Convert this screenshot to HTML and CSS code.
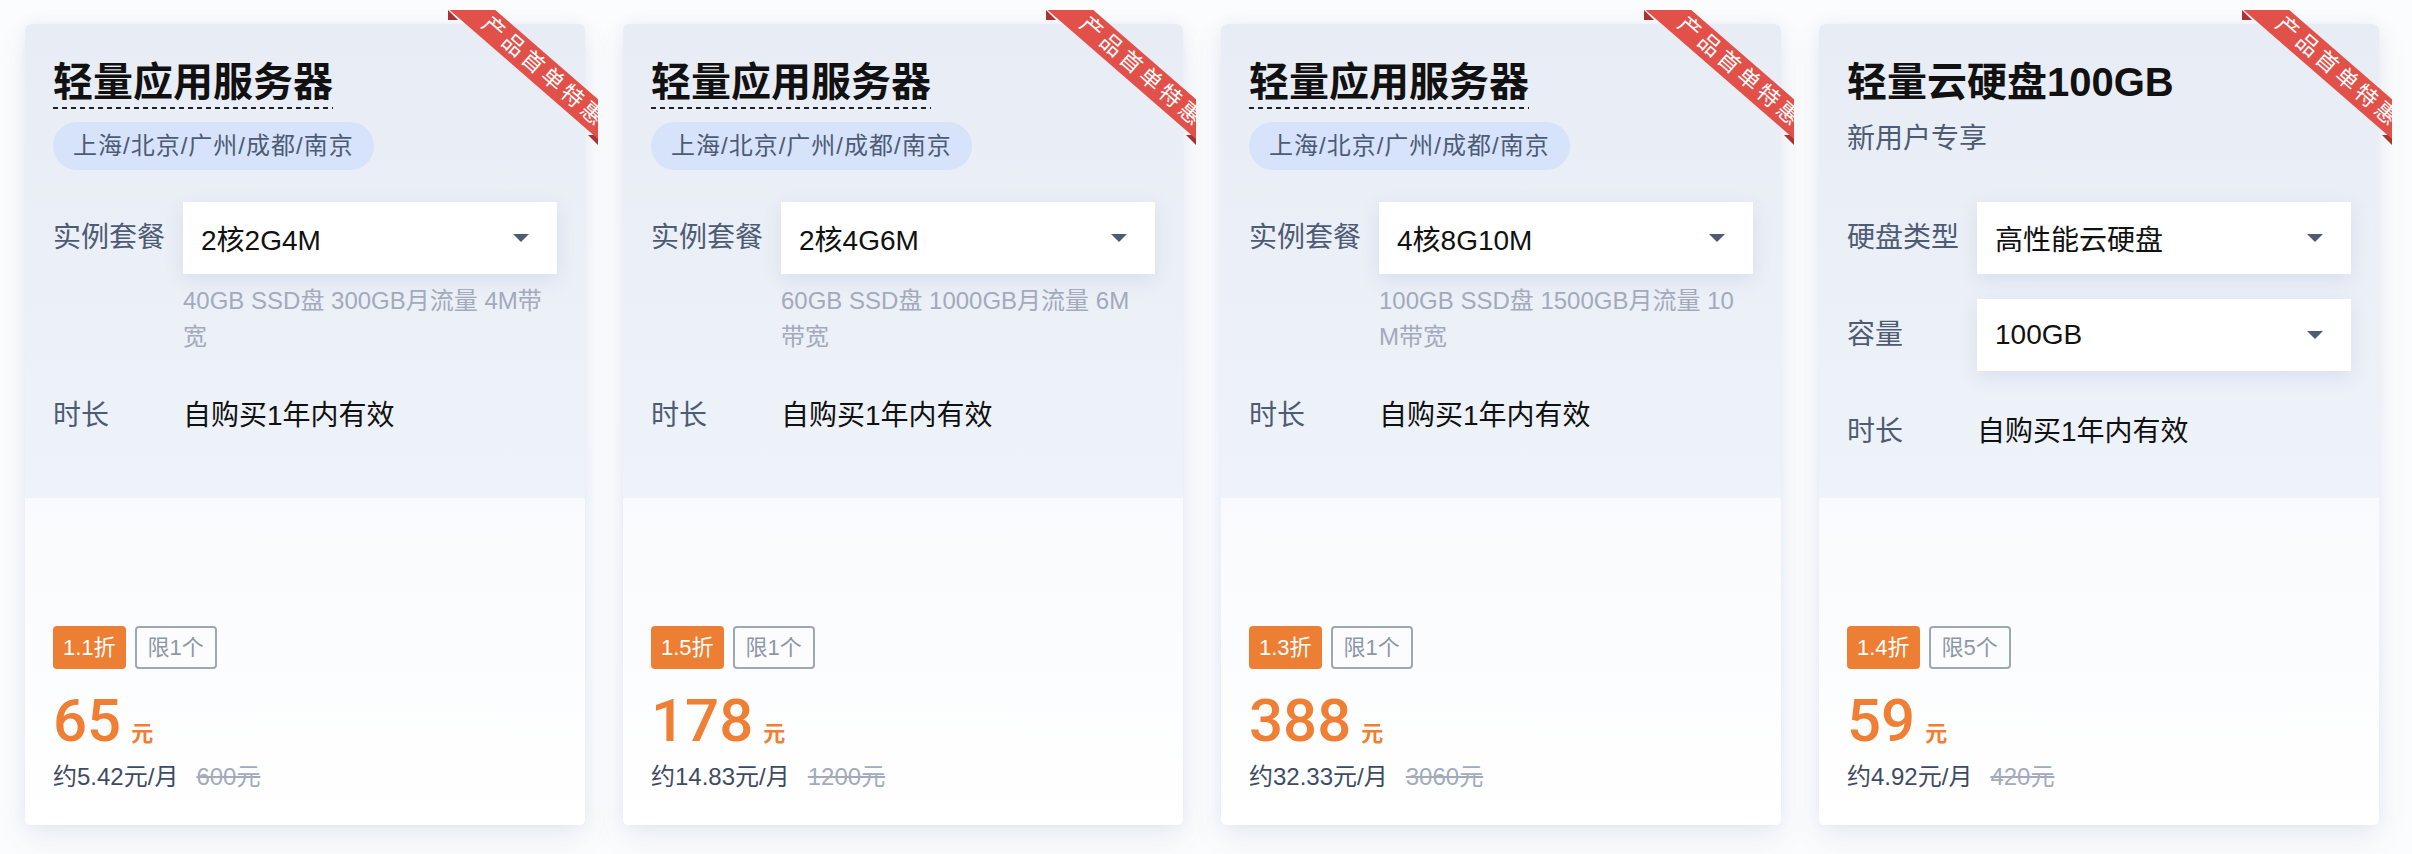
FILE: index.html
```html
<!DOCTYPE html>
<html lang="zh-CN">
<head>
<meta charset="utf-8">
<title>轻量产品特惠</title>
<link rel="stylesheet" href="styles.css">
</head>
<body>
<div class="cards">

  <div class="card">
    <div class="ribbon"><span class="ribbon-text">产品首单特惠</span></div>
    <div class="card-top">
      <div class="head">
        <div class="title dashed">轻量应用服务器</div>
        <div class="pill">上海/北京/广州/成都/南京</div>
      </div>
      <div class="form">
        <div class="row">
          <div class="label">实例套餐</div>
          <div class="control">
            <div class="select"><span>2核2G4M</span><i class="caret"></i></div>
            <div class="desc">40GB SSD盘 300GB月流量 4M带宽</div>
          </div>
        </div>
        <div class="row">
          <div class="label">时长</div>
          <div class="control"><div class="value">自购买1年内有效</div></div>
        </div>
      </div>
    </div>
    <div class="card-bottom">
      <div class="tags"><span class="tag-discount">1.1折</span><span class="tag-limit">限1个</span></div>
      <div class="price"><span class="num">65</span><span class="unit">元</span></div>
      <div class="sub"><span class="monthly">约5.42元/月</span><span class="orig">600元</span></div>
    </div>
  </div>

  <div class="card">
    <div class="ribbon"><span class="ribbon-text">产品首单特惠</span></div>
    <div class="card-top">
      <div class="head">
        <div class="title dashed">轻量应用服务器</div>
        <div class="pill">上海/北京/广州/成都/南京</div>
      </div>
      <div class="form">
        <div class="row">
          <div class="label">实例套餐</div>
          <div class="control">
            <div class="select"><span>2核4G6M</span><i class="caret"></i></div>
            <div class="desc">60GB SSD盘 1000GB月流量 6M带宽</div>
          </div>
        </div>
        <div class="row">
          <div class="label">时长</div>
          <div class="control"><div class="value">自购买1年内有效</div></div>
        </div>
      </div>
    </div>
    <div class="card-bottom">
      <div class="tags"><span class="tag-discount">1.5折</span><span class="tag-limit">限1个</span></div>
      <div class="price"><span class="num">178</span><span class="unit">元</span></div>
      <div class="sub"><span class="monthly">约14.83元/月</span><span class="orig">1200元</span></div>
    </div>
  </div>

  <div class="card">
    <div class="ribbon"><span class="ribbon-text">产品首单特惠</span></div>
    <div class="card-top">
      <div class="head">
        <div class="title dashed">轻量应用服务器</div>
        <div class="pill">上海/北京/广州/成都/南京</div>
      </div>
      <div class="form">
        <div class="row">
          <div class="label">实例套餐</div>
          <div class="control">
            <div class="select"><span>4核8G10M</span><i class="caret"></i></div>
            <div class="desc">100GB SSD盘 1500GB月流量 10M带宽</div>
          </div>
        </div>
        <div class="row">
          <div class="label">时长</div>
          <div class="control"><div class="value">自购买1年内有效</div></div>
        </div>
      </div>
    </div>
    <div class="card-bottom">
      <div class="tags"><span class="tag-discount">1.3折</span><span class="tag-limit">限1个</span></div>
      <div class="price"><span class="num">388</span><span class="unit">元</span></div>
      <div class="sub"><span class="monthly">约32.33元/月</span><span class="orig">3060元</span></div>
    </div>
  </div>

  <div class="card">
    <div class="ribbon"><span class="ribbon-text">产品首单特惠</span></div>
    <div class="card-top">
      <div class="head">
        <div class="title">轻量云硬盘100GB</div>
        <div class="subtitle">新用户专享</div>
      </div>
      <div class="form">
        <div class="row">
          <div class="label">硬盘类型</div>
          <div class="control">
            <div class="select"><span>高性能云硬盘</span><i class="caret"></i></div>
          </div>
        </div>
        <div class="row">
          <div class="label">容量</div>
          <div class="control">
            <div class="select"><span>100GB</span><i class="caret"></i></div>
          </div>
        </div>
        <div class="row">
          <div class="label">时长</div>
          <div class="control"><div class="value">自购买1年内有效</div></div>
        </div>
      </div>
    </div>
    <div class="card-bottom">
      <div class="tags"><span class="tag-discount">1.4折</span><span class="tag-limit">限5个</span></div>
      <div class="price"><span class="num">59</span><span class="unit">元</span></div>
      <div class="sub"><span class="monthly">约4.92元/月</span><span class="orig">420元</span></div>
    </div>
  </div>

</div>
</body>
</html>
```

FILE: styles.css
```css
* {
  box-sizing: border-box;
  margin: 0;
  padding: 0;
}

html,
body {
  background: #fbfcfd;
}

body {
  width: 2412px;
  height: 854px;
  overflow: hidden;
  font-family: "Liberation Sans", "Noto Sans CJK SC", sans-serif;
  color: #111;
}

.cards {
  display: flex;
  gap: 38px;
  padding: 24px 0 0 25px;
}

.card {
  position: relative;
  width: 560px;
  height: 801px;
  display: flex;
  flex-direction: column;
  background: #fff;
  border-radius: 6px;
  box-shadow: 0 12px 30px rgba(70, 100, 170, 0.10), 0 0 14px rgba(70, 100, 170, 0.06);
}

/* ribbon */
.ribbon {
  position: absolute;
  top: -14px;
  right: -13px;
  width: 150px;
  height: 135px;
  overflow: hidden;
  z-index: 2;
}

.ribbon::before,
.ribbon::after {
  content: "";
  position: absolute;
  width: 10px;
  height: 10px;
  background: #a9342f;
}

.ribbon::before {
  top: 0;
  left: 0;
  clip-path: polygon(0 0, 100% 100%, 0 100%);
}

.ribbon::after {
  right: 0;
  bottom: 0;
  clip-path: polygon(0 0, 100% 0, 100% 100%);
}

.ribbon-text {
  position: absolute;
  left: -25px;
  top: 42px;
  width: 230px;
  height: 30px;
  line-height: 30px;
  padding-left: 16px;
  text-align: center;
  background: #e2504a;
  color: #fff;
  font-size: 22px;
  letter-spacing: 4px;
  transform: rotate(41deg);
  z-index: 1;
}

/* top area */
.card-top {
  height: 474px;
  padding: 38px 28px 0;
  background: linear-gradient(180deg, #e8ecf4 0%, #eef2f9 100%);
  border-radius: 6px 6px 0 0;
}

.head {
  height: 140px;
}

.title {
  display: inline-block;
  font-size: 40px;
  font-weight: 700;
  line-height: 40px;
  color: #111;
}

.title.dashed {
  padding-bottom: 7px;
  background: repeating-linear-gradient(90deg, #222 0 5px, transparent 5px 9px) left bottom / 100% 2px no-repeat;
}

.pill {
  width: fit-content;
  margin-top: 13px;
  height: 48px;
  line-height: 48px;
  padding: 0 20px;
  border-radius: 24px;
  background: #d6e3fb;
  color: #4e5b74;
  font-size: 24px;
  letter-spacing: 1px;
}

.subtitle {
  margin-top: 13px;
  line-height: 48px;
  font-size: 28px;
  color: #4e5b74;
}

.form {
  display: flex;
  flex-direction: column;
  gap: 25px;
}

.row {
  display: flex;
  align-items: flex-start;
}

.label {
  width: 130px;
  flex: none;
  font-size: 28px;
  line-height: 72px;
  color: #4e5b74;
}

.control {
  flex: 1;
  min-width: 0;
}

.select {
  height: 72px;
  display: flex;
  align-items: center;
  justify-content: space-between;
  padding: 0 28px 0 18px;
  background: #fff;
  font-size: 28px;
  color: #111;
  box-shadow: 0 6px 18px rgba(100, 125, 180, 0.14);
}

.caret {
  width: 0;
  height: 0;
  border-left: 8px solid transparent;
  border-right: 8px solid transparent;
  border-top: 8px solid #4e5b74;
}

.desc {
  margin-top: 9px;
  padding-right: 7px;
  font-size: 24px;
  line-height: 36px;
  color: #a2aabb;
  word-break: break-all;
}

.value {
  font-size: 28px;
  line-height: 72px;
  color: #111;
}

/* bottom area */
.card-bottom {
  flex: 1;
  display: flex;
  flex-direction: column;
  justify-content: flex-end;
  padding: 0 28px 30px;
  background: linear-gradient(180deg, #f9fafd 0%, #ffffff 100%);
  border-radius: 0 0 6px 6px;
}

.tags {
  display: flex;
  gap: 9px;
}

.tag-discount {
  height: 43px;
  line-height: 43px;
  padding: 0 10px;
  border-radius: 4px;
  background: #ed7f34;
  color: #fff;
  font-size: 22px;
}

.tag-limit {
  height: 43px;
  line-height: 39px;
  padding: 0 11px;
  border: 2px solid #9ea7b8;
  border-radius: 4px;
  color: #8d96a8;
  font-size: 22px;
}

.price {
  margin-top: 22px;
  height: 60px;
  line-height: 60px;
  display: flex;
  align-items: baseline;
  color: #ee7f34;
}

.num {
  font-family: Roboto, "Liberation Sans", sans-serif;
  font-weight: 500;
  font-size: 60px;
}

.unit {
  margin-left: 10px;
  font-size: 22px;
  font-weight: 700;
}

.sub {
  margin-top: 8px;
  line-height: 36px;
  font-size: 24px;
  color: #3f4b63;
}

.orig {
  margin-left: 18px;
  color: #a2aabb;
  text-decoration: line-through;
}
```
